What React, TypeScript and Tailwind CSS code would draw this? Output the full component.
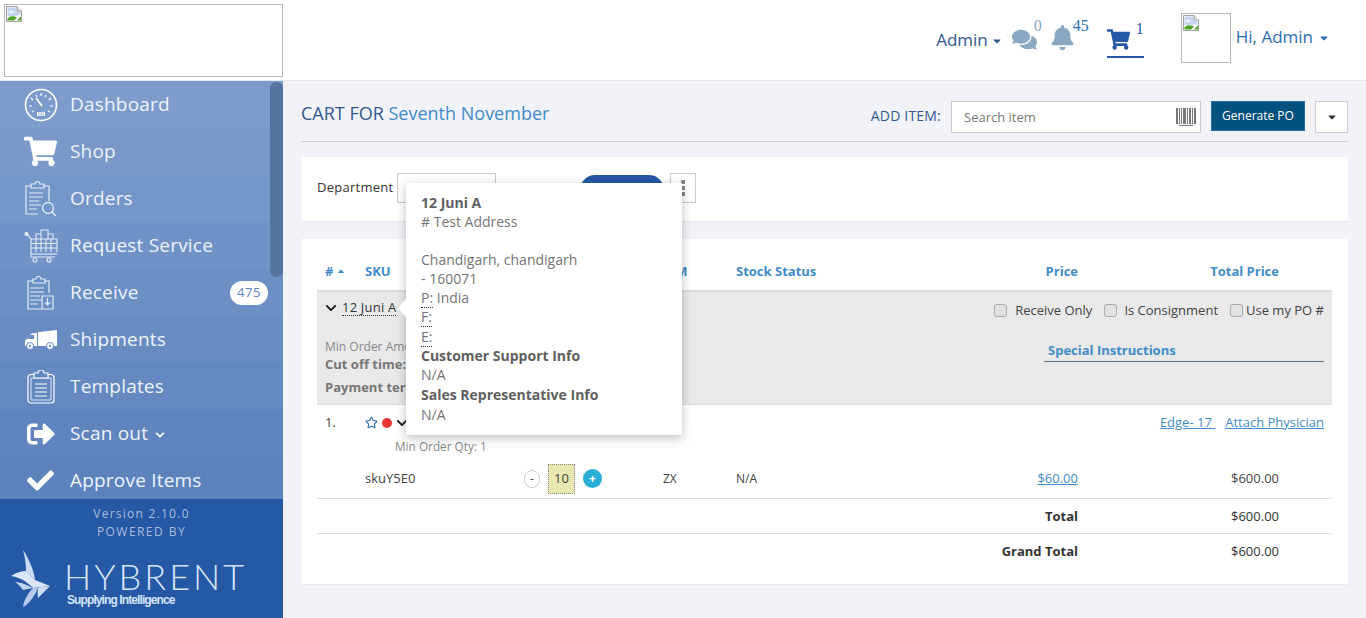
import React from "react";
import { FaCheck, FaChevronDown, FaBell, FaComments, FaShoppingCart, FaCaretDown, FaCaretUp, FaRegStar, FaSignOutAlt } from "react-icons/fa";

const BrokenImage = () => (
  <svg width="16" height="16" viewBox="0 0 16 16" className="block">
    <path d="M0.5 0.5H11L15.5 5V15.5H0.5Z" fill="#fff" stroke="#a0a0a0" />
    <path d="M1.5 1.5H10.5V5.5H14.5V9L9 10L1.5 10Z" fill="#c5d5f2" />
    <path d="M1.5 14.5V12.5C4 9.5 8 10 11 11.5L8 14.5Z" fill="#4fa42b" />
    <path d="M3 5.5C5 4 7 5 8 6.5H3Z" fill="#fff" />
    <path d="M11 14.5L15 10.5V14.5Z" fill="#4fa42b" />
    <path d="M11 0.5V5H15.5" fill="#e8e8e8" stroke="#a0a0a0" />
  </svg>
);

const Gauge = () => (
  <svg width="34" height="34" viewBox="0 0 34 34" fill="none" stroke="white">
    <circle cx="17" cy="17" r="15.5" strokeWidth="1.6" />
    <path d="M17 5v3M7 10l2 2M27 10l-2 2M5 18h3M26 18h3M8 24l2-1M26 24l-2-1M22 7l-1 2M12 7l1 2" strokeWidth="1.2" />
    <path d="M12 10l6 8" strokeWidth="1.6" />
    <path d="M13 24h8v4h-8z" fill="white" stroke="none" />
    <path d="M15 24v4M17 24v4M19 24v4" stroke="#7d9bcb" strokeWidth="0.7" />
  </svg>
);

const ClipLines = () => (
  <path d="M5 12h14M5 16h14M5 20h10M5 24h12M5 28h8" strokeWidth="1" />
);

const OrdersIcon = () => (
  <svg width="34" height="36" viewBox="0 0 34 36" fill="none" stroke="#e6edf8">
    <path d="M14 33H2V5h5M20 5h5v15" strokeWidth="1.2" />
    <path d="M7 3h4a2.500 2.500 0 0 1 5 0h4v4H7z" strokeWidth="1.2" />
    <ClipLines />
    <circle cx="24" cy="27" r="5.500" strokeWidth="1.3" />
    <path d="M28 31l4 4" strokeWidth="1.500" />
  </svg>
);

const ReceiveIcon = () => (
  <svg width="32" height="34" viewBox="0 0 32 34" fill="none" stroke="#e6edf8">
    <path d="M16 33H3V5h5M20 5h4v12" strokeWidth="1.2" />
    <path d="M8 3h3a2.500 2.500 0 0 1 5 0h4v4H8z" strokeWidth="1.2" />
    <ClipLines />
    <path d="M17 20h11v13H17z" strokeWidth="1.2" />
    <path d="M22.500 22v7M20 26.500l2.500 2.500 2.500-2.500" strokeWidth="1.2" />
  </svg>
);

const ServiceIcon = () => (
  <svg width="34" height="34" viewBox="0 0 34 34" fill="none" stroke="#e6edf8" strokeWidth="1.100">
    <circle cx="2.500" cy="5" r="1.500" fill="#e6edf8" />
    <path d="M4 6l3 4v15h26M7 10h26v13" />
    <path d="M12 10V5h5V1h7v4h5v5M17 5v5M24 5v5" />
    <path d="M7 14.500h26M7 19h26M12 10v13M17 10v13M22 10v13M27 10v13" />
    <path d="M7 25v3h24" />
    <circle cx="11" cy="31" r="2" />
    <circle cx="25" cy="31" r="2" />
  </svg>
);

const TemplatesIcon = () => (
  <svg width="28" height="34" viewBox="0 0 28 34" fill="none" stroke="white">
    <rect x="1" y="4.500" width="26" height="28.500" rx="3" strokeWidth="1.200" />
    <path d="M4 8h20v22H4z" strokeWidth="0.800" />
    <path d="M7 7V3h4a3 3 0 0 1 6 0h4v5H7z" fill="#6286bf" strokeWidth="1.200" />
    <path d="M8 14h12M8 18h12M8 22h12M8 26h12" strokeWidth="1" />
  </svg>
);

const VanIcon = () => (
  <svg width="34" height="20" viewBox="0 0 34 20">
    <path d="M15 2L33 0V16H14V2Z" fill="white" />
    <path d="M13 3V16H1V11C1 10 2 9.500 3 9L7 4C8 3 10 3 13 3Z" fill="white" />
    <path d="M6 5L3.500 9H10V5Z" fill="#688cc2" />
    <circle cx="6" cy="16" r="3.500" fill="white" stroke="#688cc2" />
    <circle cx="26" cy="16" r="3.500" fill="white" stroke="#688cc2" />
    <circle cx="6" cy="16" r="1.200" fill="#688cc2" />
    <circle cx="26" cy="16" r="1.200" fill="#688cc2" />
  </svg>
);

const Bird = () => (
  <svg width="40" height="58" viewBox="0 0 40 58" className="shrink-0">
    <path d="M12 0C18 8 24 24 24 30L15 21C15 14 14 7 12 0Z" fill="#cfdcf6" />
    <path d="M0 26C6 22 12 21 15 21L24 30L39 36L22 38C14 30 8 27 0 26Z" fill="#dbe6fa" />
    <path d="M4 32C10 32 18 36 22 38L12 40C9 36 7 34 4 32Z" fill="#c3d4f3" />
    <path d="M12 57C18 54 24 46 27 37.500L22 38C18 42 13 49 12 57Z" fill="#b7caf0" />
    <path d="M27 37.500L39 36L27 48C26 44 27 40 27 37.500Z" fill="#cfdcf6" />
  </svg>
);

const menu = [
  { label: "Dashboard", icon: <Gauge />, bg: "bg-[#7e9ccb]" },
  { label: "Shop", icon: <FaShoppingCart size={33} className="text-white" />, bg: "bg-[#7a99c9]" },
  { label: "Orders", icon: <OrdersIcon />, bg: "bg-[#7596c8]" },
  { label: "Request Service", icon: <ServiceIcon />, bg: "bg-[#7092c6]" },
  { label: "Receive", icon: <ReceiveIcon />, bg: "bg-[#6c8fc4]", badge: "475" },
  { label: "Shipments", icon: <VanIcon />, bg: "bg-[#688cc2]" },
  { label: "Templates", icon: <TemplatesIcon />, bg: "bg-[#6488c0]" },
  { label: "Scan out", icon: <FaSignOutAlt size={28} className="text-white" />, bg: "bg-[#6085be]", chevron: true },
  { label: "Approve Items", icon: <FaCheck size={27} className="text-white" />, bg: "bg-[#5d83bd]" },
];

function Sidebar() {
  return (
    <aside className="relative flex h-[537px] w-[283px] shrink-0 flex-col">
      <div className="h-[418px] overflow-hidden">
        {menu.map((item) => (
          <div key={item.label} className={`flex h-[47px] items-center ${item.bg}`}>
            <div className="flex w-[70px] justify-center pl-[11px]">{item.icon}</div>
            <span className="text-[19px] tracking-[0.2px] text-[#eef3fb]">{item.label}</span>
            {item.chevron && <FaChevronDown size={10} className="ml-[7px] mt-[2px] text-white" />}
            {item.badge && (
              <span className="ml-auto mr-[15px] flex h-6 w-[38px] items-center justify-center rounded-[12px] bg-white text-[13px] tracking-[0.5px] text-[#5f86bf]">
                {item.badge}
              </span>
            )}
          </div>
        ))}
      </div>
      {/* scrollbar sits on top of the menu */}
      <div className="absolute right-0 top-[1px] h-[195px] w-[13px] rounded-[6px] bg-[#57739f]" />
      <div className="flex flex-1 flex-col items-center bg-[#2558a5] pt-[6px]">
        <div className="text-[12px] leading-[18px] tracking-[1.25px] text-[#a9bedf]">Version 2.10.0</div>
        <div className="text-[12px] leading-[18px] tracking-[1.45px] text-[#a9bedf]">POWERED BY</div>
        <div className="mt-[9px] flex w-full items-start pl-[11px]">
          <Bird />
          <div className="ml-[13px] mt-[10px]">
            <div className="font-['Lato'] text-[36px] font-light leading-[32px] tracking-[3px] text-[#d6e4fb]">HYBRENT</div>
            <div className="ml-[3px] mt-[1px] font-['Liberation_Sans'] text-[12px] font-bold leading-[14px] tracking-[-0.9px] text-[#d6e4fb]">
              Supplying Intelligence
            </div>
          </div>
        </div>
      </div>
    </aside>
  );
}

function TopBar() {
  return (
    <header className="flex h-[81px] items-center border-b border-[#e6e8ee] bg-white pl-1 pr-[36px]">
      <div className="h-[73px] w-[279px] border border-[#bbb] pl-[1px] pt-[1px]">
        <BrokenImage />
      </div>
      <div className="ml-auto mt-[-1px] flex items-center">
        <span className="mt-[1px] text-[17px] text-[#34598f]">Admin</span>
        <FaCaretDown size={12} className="ml-[3px] mt-[3px] text-[#34598f]" />
        <FaComments size={25} className="ml-[9px] text-[#8aa8c2]" />
        <span className="mb-[27px] ml-[-3px] font-['Liberation_Serif'] text-[16px] leading-[16px] text-[#8aa8c2]">0</span>
        <FaBell size={25} className="ml-[8px] mb-[4px] text-[#8aa8c2]" />
        <span className="mb-[27px] ml-[-2px] font-['Liberation_Serif'] text-[16px] leading-[16px] text-[#2e6db4]">45</span>
        <div className="ml-[18px] mt-[6px] flex h-[30px] w-[37px] items-start border-b-2 border-[#2558a5]">
          <FaShoppingCart size={23} className="text-[#2558a5]" />
          <span className="ml-[6px] mt-[-7px] font-['Liberation_Serif'] text-[16px] leading-[16px] text-[#2558a5]">1</span>
        </div>
        <div className="ml-[37px] mb-[4px] h-[50px] w-[50px] border border-[#bbb] pl-[1px] pt-[1px]">
          <BrokenImage />
        </div>
        <span className="ml-[5px] mb-[6px] text-[17px] text-[#2e6db4]">Hi, Admin</span>
        <FaCaretDown size={12} className="ml-[5px] mb-[4px] text-[#2e6db4]" />
      </div>
    </header>
  );
}

const Check = ({ label, gap }: { label: string; gap: string }) => (
  <label className="flex items-center text-[13px] text-[#444]">
    <span className={`h-[13px] w-[13px] rounded-[3px] border border-[#aaa] bg-[#e2e2e2] ${gap}`} />
    {label}
  </label>
);

const colHead = "text-[13px] font-bold text-[#428bca]";
const dotted = "border-b border-dotted border-[#333]";

function Popover() {
  return (
    <div className="absolute left-[123px] top-[102px] z-10 h-[252px] w-[276px] bg-white px-[15px] pt-[10px] text-[14px] leading-[19.300px] text-[#757575] shadow-[0_3px_10px_rgba(0,0,0,0.25)]">
      <div className="absolute left-[-7px] top-[118px] h-[14px] w-[14px] rotate-45 border-b border-l border-[#ddd] bg-white" />
      <div className="font-bold text-[#5f5f5f]">12 Juni A</div>
      <div># Test Address</div>
      <div className="h-[18px]" />
      <div>Chandigarh, chandigarh</div>
      <div>- 160071</div>
      <div>
        <span className={dotted}>P:</span> India
      </div>
      <div>
        <span className={dotted}>F:</span>
      </div>
      <div>
        <span className={dotted}>E:</span>
      </div>
      <div className="font-bold text-[#5f5f5f]">Customer Support Info</div>
      <div className="leading-[20px]">N/A</div>
      <div className="font-bold leading-[20px] text-[#5f5f5f]">Sales Representative Info</div>
      <div className="leading-[20px]">N/A</div>
    </div>
  );
}

function CartTable() {
  return (
    <section className="mt-[18px] h-[345px] bg-white px-4 shadow-[0_1px_1px_rgba(0,0,0,0.04)]">
      <div className="flex h-[51px] items-end pb-[9px]">
        <div className="flex w-[48px] items-center pl-2">
          <span className={colHead}>#</span>
          <FaCaretUp size={10} className="ml-[3px] text-[#428bca]" />
        </div>
        <span className={`${colHead} w-[290px]`}>SKU</span>
        <span className={`${colHead} w-[81px]`}>UOM</span>
        <span className={`${colHead} w-[262px]`}>Stock Status</span>
        <span className={`${colHead} w-[80px] text-right`}>Price</span>
        <span className={`${colHead} w-[201px] text-right`}>Total Price</span>
      </div>

      <div className="flex h-[115px] justify-between border-y border-t-2 border-y-[#ddd] bg-[#e9e9e9] pl-2 pr-2">
        <div className="text-[13px]">
          <div className="mt-[7px] flex items-center text-[#333]">
            <FaChevronDown size={12} className="mr-[5px] text-[#222]" />
            <span className={`${dotted} leading-[16px] tracking-[0.2px]`}>12 Juni A</span>
          </div>
          <div className="mt-[22px] text-[12px] leading-[18px] text-[#888]">Min Order Amount</div>
          <div className="mt-[-1px] font-bold leading-[18px] text-[#777]">Cut off time:</div>
          <div className="mt-[5px] font-bold leading-[18px] text-[#777]">Payment terms</div>
        </div>
        <div className="flex w-[340px] flex-col">
          <div className="mt-[9px] flex justify-end">
            <Check label="Receive Only" gap="mr-[8px]" />
            <span className="w-3" />
            <Check label="Is Consignment" gap="mr-[7px]" />
            <span className="w-3" />
            <Check label="Use my PO #" gap="mr-[3px]" />
          </div>
          <div className="ml-auto mt-[20px] w-[280px] border-b border-[#5a6e85] pb-[2px] pl-1 text-[13px] font-bold leading-[18px] text-[#428bca]">
            Special Instructions
          </div>
        </div>
      </div>

      <div className="flex h-[94px] border-b border-[#ddd] text-[13px] text-[#444]">
        <div className="w-[48px] pl-2 pt-[8px] text-[13px]">1.</div>
        <div className="flex-1">
          <div className="flex items-center pt-[8px]">
            <FaRegStar size={13} className="text-[#2e6db4]" />
            <span className="ml-[4px] h-[10px] w-[10px] rounded-full bg-[#e53935]" />
            <FaChevronDown size={12} className="ml-[4px] text-[#222]" />
            <div className="ml-auto flex gap-[10px] pr-2 text-[13px] text-[#428bca] underline">
              <span>Edge- 17&nbsp;</span>
              <span>Attach Physician</span>
            </div>
          </div>
          <div className="ml-[30px] mt-[4px] text-[11.800px] leading-[18px] text-[#888]">Min Order Qty: 1</div>
          <div className="mt-[9px] flex items-center text-[13px]">
            <span className="w-[159px]">skuY5E0</span>
            <span className="flex h-[18px] w-4 items-center justify-center rounded-[8px] border border-[#ccc] text-[12px]">-</span>
            <span className="ml-2 flex h-[30px] w-[27px] items-center justify-center border border-dotted border-[#888] bg-[#e8e8b0] text-[13px]">10</span>
            <span className="ml-2 flex h-[19px] w-[19px] items-center justify-center rounded-full bg-[#2baed6] text-[12px] font-bold text-white">+</span>
            <span className="ml-[61px] w-[73px] text-[12px]">ZX</span>
            <span className="w-[262px] text-[12px]">N/A</span>
            <span className="w-[80px] text-right text-[#428bca] underline">$60.00</span>
            <span className="w-[201px] text-right">$600.00</span>
          </div>
        </div>
      </div>

      <div className="flex h-[35px] items-center justify-end border-b border-[#ddd] pt-[1px] text-[13px] text-[#333]">
        <span className="w-[100px] text-right font-bold">Total</span>
        <span className="ml-[101px] mr-[53px] w-[100px] text-right">$600.00</span>
      </div>
      <div className="flex h-[35px] items-center justify-end text-[13px] text-[#333]">
        <span className="w-[100px] text-right font-bold">Grand Total</span>
        <span className="ml-[101px] mr-[53px] w-[100px] text-right">$600.00</span>
      </div>
    </section>
  );
}

export default function App() {
  return (
    <div className="h-[618px] w-[1366px] overflow-hidden bg-[#f1f3f8] font-['Open_Sans',sans-serif]">
      <TopBar />
      <div className="flex">
        <Sidebar />
        <main className="relative flex-1 px-[18px]">
          <div className="flex h-[61px] items-start border-b border-[#ccc] pt-[20px]">
            <h1 className="mt-[-1px] text-[18px] text-[#34598f]">
              CART FOR <span className="text-[#428bca]">Seventh November</span>
            </h1>
            <span className="ml-auto mt-[4px] text-[14px] tracking-[0.2px] text-[#34598f]">ADD ITEM:</span>
            <div className="ml-[10px] flex h-8 w-[250px] items-center justify-between border border-[#ccc] bg-white pl-3 pr-[4px]">
              <span className="mt-[1px] text-[13px] text-[#777]">Search item</span>
              <div className="flex flex-col items-center gap-[1px]">
                <div className="flex h-[16px] items-stretch gap-[1px]">
                  {[2, 1, 1, 3, 1, 2, 1, 2].map((w, i) => (
                    <span key={i} style={{ width: w }} className="bg-[#777]" />
                  ))}
                </div>
                <span className="h-[1px] w-[14px] bg-[#888]" />
              </div>
            </div>
            <button className="ml-[10px] h-[30px] w-[94px] border border-[#2a6ca8] bg-[#04507f] text-[12px] text-white">
              Generate PO
            </button>
            <button className="ml-[10px] flex h-8 w-[33px] items-center justify-center border border-[#ccc] bg-white">
              <FaCaretDown size={12} className="text-[#333]" />
            </button>
          </div>

          <section className="relative mt-[15px] flex h-[64px] items-start bg-white px-4 pt-4 shadow-[0_1px_1px_rgba(0,0,0,0.04)]">
            <span className="mt-[5px] text-[13px] tracking-[0.27px] text-[#333]">Department</span>
            <div className="ml-[3px] h-[30px] w-[99px] border border-[#ccc]" />
            <span className="ml-[66px] mt-[5px] text-[13px] text-[#333]">:</span>
            <div className="ml-[15px] mt-[2px] h-[28px] w-[84px] rounded-t-[15px] bg-[#2558a5]" />
            <div className="ml-[6px] flex h-[30px] w-[26px] flex-col items-center justify-center gap-[2px] border border-[#ccc]">
              <span className="h-[4px] w-[4px] bg-[#888]" />
              <span className="h-[4px] w-[4px] bg-[#888]" />
              <span className="h-[4px] w-[4px] bg-[#888]" />
            </div>
          </section>

          <CartTable />
          <Popover />
        </main>
      </div>
    </div>
  );
}
